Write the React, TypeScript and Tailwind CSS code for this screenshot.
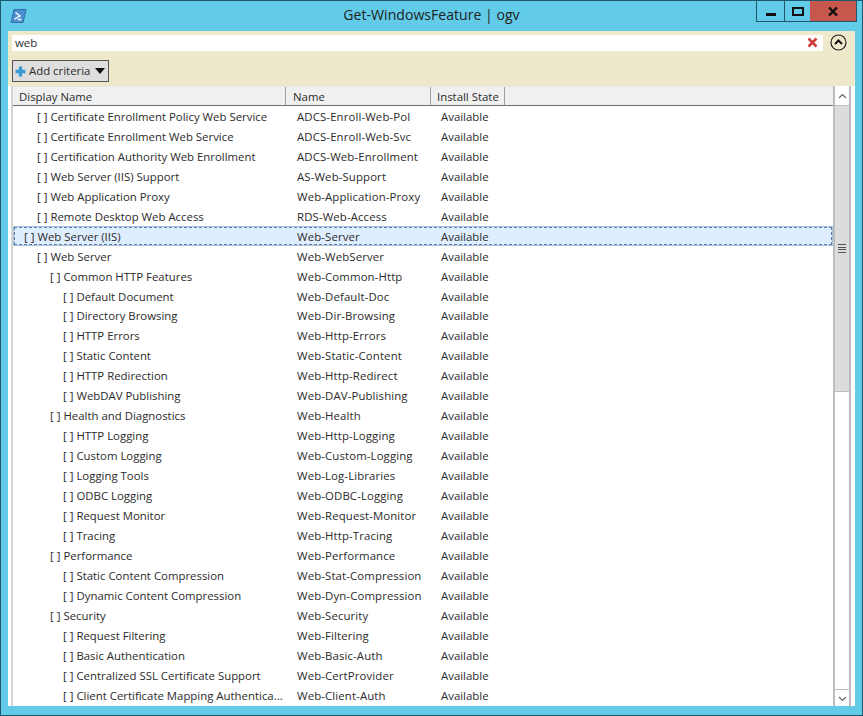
const rows: [number, string, string][] = [
  [1, "Certificate Enrollment Policy Web Service", "ADCS-Enroll-Web-Pol"],
  [1, "Certificate Enrollment Web Service", "ADCS-Enroll-Web-Svc"],
  [1, "Certification Authority Web Enrollment", "ADCS-Web-Enrollment"],
  [1, "Web Server (IIS) Support", "AS-Web-Support"],
  [1, "Web Application Proxy", "Web-Application-Proxy"],
  [1, "Remote Desktop Web Access", "RDS-Web-Access"],
  [0, "Web Server (IIS)", "Web-Server"],
  [1, "Web Server", "Web-WebServer"],
  [2, "Common HTTP Features", "Web-Common-Http"],
  [3, "Default Document", "Web-Default-Doc"],
  [3, "Directory Browsing", "Web-Dir-Browsing"],
  [3, "HTTP Errors", "Web-Http-Errors"],
  [3, "Static Content", "Web-Static-Content"],
  [3, "HTTP Redirection", "Web-Http-Redirect"],
  [3, "WebDAV Publishing", "Web-DAV-Publishing"],
  [2, "Health and Diagnostics", "Web-Health"],
  [3, "HTTP Logging", "Web-Http-Logging"],
  [3, "Custom Logging", "Web-Custom-Logging"],
  [3, "Logging Tools", "Web-Log-Libraries"],
  [3, "ODBC Logging", "Web-ODBC-Logging"],
  [3, "Request Monitor", "Web-Request-Monitor"],
  [3, "Tracing", "Web-Http-Tracing"],
  [2, "Performance", "Web-Performance"],
  [3, "Static Content Compression", "Web-Stat-Compression"],
  [3, "Dynamic Content Compression", "Web-Dyn-Compression"],
  [2, "Security", "Web-Security"],
  [3, "Request Filtering", "Web-Filtering"],
  [3, "Basic Authentication", "Web-Basic-Auth"],
  [3, "Centralized SSL Certificate Support", "Web-CertProvider"],
  [3, "Client Certificate Mapping Authentica...", "Web-Client-Auth"],
];

const indents = ["pl-[11px]", "pl-[24px]", "pl-[37px]", "pl-[50px]"];

function PsIcon() {
  return (
    <svg width="17" height="16" viewBox="0 0 17 16">
      <path d="M4 1.5h12l-3 13H1z" fill="#4a8fd0" stroke="#2f6ca8" strokeWidth="1" />
      <path d="M5.5 4.5l4.5 3.5-5.5 3.2M8 11.5h3.5" fill="none" stroke="#fff" strokeWidth="1.4" />
    </svg>
  );
}

function Row({ level, name, id }: { level: number; name: string; id: string }) {
  const selected = level === 0;
  return (
    <div
      className={`flex h-[19.97px] items-center leading-none whitespace-nowrap ${
        selected ? "border border-[#a9c2de] bg-[#dfeeff] outline-1 -outline-offset-2 outline-dashed outline-[#5b7ba8]" : ""
      }`}
    >
      <div className={`w-[284px] shrink-0 ${indents[level]} ${selected ? "-ml-px" : ""}`}>
        <span className="mr-[3px]">[ ]</span>
        {name}
      </div>
      <div className="w-[144px] shrink-0 tracking-[0.12px]">{id}</div>
      <div>Available</div>
    </div>
  );
}

export default function App() {
  return (
    <div className="h-[716px] w-[863px] overflow-hidden border border-[#1d5a72] bg-[#62cbe8] font-['Open_Sans',sans-serif] text-[11.4px] text-[#2b2b2b]">
      <div className="grid h-[30px] grid-cols-[1fr_auto_1fr]">
        <div className="pl-[9px] pt-[7px]">
          <PsIcon />
        </div>
        <div className="pt-[4px] text-[14.1px] leading-[20px] text-[#222]">Get-WindowsFeature | ogv</div>
        <div className="flex justify-end pr-[5px]">
          <div className="flex h-[21px] border border-t-0 border-[#24566b]">
            <div className="flex w-[28px] items-end justify-center border-r border-[#24566b] pb-[5px]">
              <div className="h-[3px] w-[10px] bg-[#111]" />
            </div>
            <div className="flex w-[25px] items-center justify-center">
              <div className="h-[9px] w-[12px] border-2 border-[#111]" />
            </div>
            <div className="flex w-[46px] items-center justify-center bg-[#c7574c]">
              <svg width="10" height="9" viewBox="0 0 10 9">
                <path d="M1 0.5l8 8M9 0.5l-8 8" stroke="#111" strokeWidth="2.4" />
              </svg>
            </div>
          </div>
        </div>
      </div>

      <div className="mx-[7px] flex h-[675px] flex-col bg-white">
        <div className="h-[55px] bg-[#efe9cc] px-[4px] pt-[3px]">
          <div className="flex items-center">
            <div className="flex h-[16px] w-[811px] items-center justify-between bg-white pl-[3px] pr-[5px]">
              <span>web</span>
              <svg width="11" height="11" viewBox="0 0 11 11">
                <path d="M1.5 1.5l8 8M9.5 1.5l-8 8" stroke="#d0403a" strokeWidth="2.6" />
              </svg>
            </div>
            <svg className="ml-[7px]" width="17" height="17" viewBox="0 0 17 17">
              <circle cx="8.5" cy="8.5" r="7.5" fill="none" stroke="#222" strokeWidth="1.2" />
              <path d="M5 10l3.5-3.5L12 10" fill="none" stroke="#111" strokeWidth="2" />
            </svg>
          </div>
          <div className="mt-[9px] flex h-[22px] w-[97px] items-center whitespace-nowrap border border-[#555] bg-[#dedede] pl-[2px]">
            <svg width="11" height="11" viewBox="0 0 11 11">
              <path d="M5.5 0.5v10M0.5 5.5h10" stroke="#3a98d4" strokeWidth="3.4" />
            </svg>
            <span className="ml-[3px]">Add criteria</span>
            <svg className="ml-[5px]" width="10" height="6" viewBox="0 0 10 6">
              <path d="M0 0h10L5 6z" fill="#111" />
            </svg>
          </div>
        </div>

        <div className="flex flex-1 overflow-hidden pl-[3px] pr-[4px]">
          <div className="flex min-w-0 flex-1 flex-col border-l-2 border-[#d4d4d4]">
            <div className="flex h-[20px] shrink-0 items-center border-b border-t border-[#6a6f74] border-t-[#e8e8e8] bg-[#f0f0f0]">
              <div className="flex h-full w-[273px] items-center border-r border-[#a0a0a0] pl-[6px] pt-[2px]">Display Name</div>
              <div className="flex h-full w-[145px] items-center border-r border-[#a0a0a0] pl-[7px] pt-[2px]">Name</div>
              <div className="flex h-full w-[74px] items-center border-r border-[#a0a0a0] pl-[6px] pt-[2px]">Install State</div>
            </div>
            <div className="overflow-hidden pt-[0.5px]">
              {rows.map((r) => (
                <Row key={r[2]} level={r[0]} name={r[1]} id={r[2]} />
              ))}
            </div>
          </div>
          <div className="flex h-[621px] w-[18px] shrink-0 flex-col border-x-2 border-[#bdbdbd] bg-white">
            <div className="flex h-[19px] shrink-0 items-center justify-center">
              <svg width="9" height="6" viewBox="0 0 9 6">
                <path d="M1 5l3.5-3.5L8 5" fill="none" stroke="#666" strokeWidth="1.2" />
              </svg>
            </div>
            <div className="flex h-[287px] items-center justify-center border-y border-[#bdbdbd] bg-[#dcdcdc]">
              <div className="flex h-[9px] w-[8px] flex-col justify-between">
                <div className="h-px bg-[#555]" />
                <div className="h-px bg-[#555]" />
                <div className="h-px bg-[#555]" />
                <div className="h-px bg-[#555]" />
              </div>
            </div>
            <div className="flex-1" />
            <div className="flex h-[18px] shrink-0 items-center justify-center border-t border-[#bdbdbd]">
              <svg width="9" height="6" viewBox="0 0 9 6">
                <path d="M1 1l3.5 3.5L8 1" fill="none" stroke="#666" strokeWidth="1.2" />
              </svg>
            </div>
          </div>
        </div>
      </div>
    </div>
  );
}
